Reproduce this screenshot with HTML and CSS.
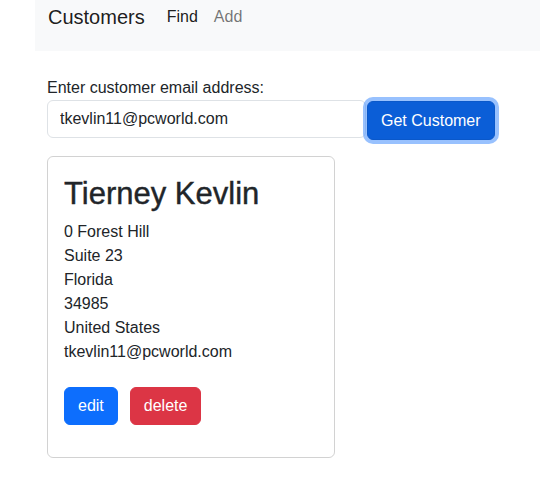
FILE: index.html
```html
<!DOCTYPE html>
<html lang="en">
<head>
<meta charset="utf-8">
<title>Customers</title>
<link rel="stylesheet" href="styles.css">
</head>
<body>
<nav class="navbar">
  <span class="brand">Customers</span>
  <a class="nav-link active" href="#">Find</a>
  <a class="nav-link" href="#">Add</a>
</nav>
<main class="content">
  <label class="label" for="email">Enter customer email address:</label>
  <div class="search-row">
    <input class="input" id="email" type="text" value="tkevlin11@pcworld.com">
    <button class="btn btn-primary focused" type="button">Get Customer</button>
  </div>
  <div class="card">
    <h1 class="card-title">Tierney Kevlin</h1>
    <div class="card-text">
      <div>0 Forest Hill</div>
      <div>Suite 23</div>
      <div>Florida</div>
      <div>34985</div>
      <div>United States</div>
      <div>tkevlin11@pcworld.com</div>
    </div>
    <div class="actions">
      <button class="btn btn-edit" type="button">edit</button>
      <button class="btn btn-delete" type="button">delete</button>
    </div>
  </div>
</main>
</body>
</html>
```
FILE: styles.css
```css
* { box-sizing: border-box; }
html, body { margin: 0; padding: 0; background: #fff; }
body {
  font-family: "Liberation Sans", Arial, sans-serif;
  font-size: 16px;
  line-height: 24px;
  color: #212529;
}
.navbar {
  margin-left: 35px;
  height: 51px;
  background: #f8f9fa;
  display: flex;
  align-items: flex-start;
  padding-left: 13px;
}
.brand {
  font-size: 20px;
  line-height: 30px;
  margin-top: 2px;
  margin-right: 14px;
  color: rgba(0,0,0,0.9);
}
.nav-link {
  padding: 5px 8px 0;
  line-height: 24px;
  text-decoration: none;
  color: rgba(0,0,0,0.55);
}
.nav-link.active { color: rgba(0,0,0,0.9); }
.content {
  padding-left: 47px;
  padding-top: 26px;
}
.label { display: block; margin-top: -1px; }
.search-row {
  display: flex;
  align-items: flex-start;
  gap: 1px;
  margin-bottom: 16px;
}
.input {
  width: 319px;
  height: 38px;
  padding: 6px 12px;
  font: inherit;
  color: #212529;
  border: 1px solid #dee2e6;
  border-radius: 6px;
  background: #fff;
  outline: none;
}
.btn {
  font: inherit;
  line-height: 24px;
  padding: 6px 13px;
  border: 1px solid transparent;
  border-radius: 6px;
  color: #fff;
  cursor: pointer;
}
.btn-primary {
  margin-top: 1px;
  height: 39px;
  background: #0b5ed7;
  border-color: #0a58ca;
}
.focused { box-shadow: 0 0 0 4px rgba(49,132,253,0.5); }
.card {
  width: 288px;
  border: 1px solid rgba(0,0,0,0.175);
  border-radius: 6px;
  padding: 19px 16px 32px;
}
.card-title {
  margin: 0 0 8px;
  font-size: 31px;
  line-height: 36px;
  font-weight: 500;
  -webkit-text-stroke: 0.4px #212529;
}
.actions {
  display: flex;
  gap: 12px;
  margin-top: 23px;
}
.btn-edit { background: #0d6efd; border-color: #0d6efd; }
.btn-delete { background: #dc3545; border-color: #dc3545; }
```
